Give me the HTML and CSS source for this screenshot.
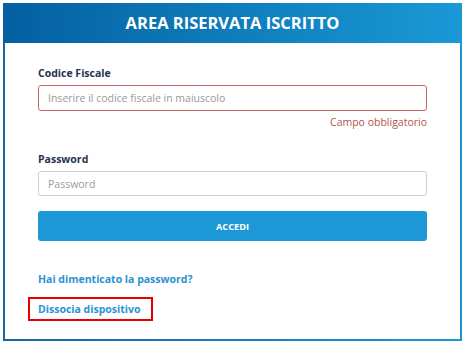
FILE: index.html
```html
<!DOCTYPE html>
<html lang="it">
<head>
<meta charset="utf-8">
<title>Area riservata iscritto</title>
<link rel="stylesheet" href="styles.css">
</head>
<body>
<div class="panel">
  <div class="panel-head">AREA RISERVATA ISCRITTO</div>
  <form class="panel-body">
    <label class="label label-first">Codice Fiscale</label>
    <input class="field field-error" type="text" placeholder="Inserire il codice fiscale in maiuscolo">
    <div class="error">Campo obbligatorio</div>
    <label class="label label-second">Password</label>
    <input class="field field-pass" type="password" placeholder="Password">
    <button class="btn" type="button">ACCEDI</button>
    <a class="link link-first" href="#">Hai dimenticato la password?</a>
    <div class="link-row"><a class="link link-boxed" href="#">Dissocia dispositivo</a></div>
  </form>
</div>
</body>
</html>
```

FILE: styles.css
```css
html, body {
  margin: 0;
  padding: 0;
  background: #ffffff;
}
body {
  padding: 3px 0 0 3px;
  font-family: "Open Sans", "Noto Sans", sans-serif;
}
.panel {
  width: 455px;
  border: 2px solid;
  border-image: linear-gradient(to right, #1a64a0, #1b97d4) 1;
  border-top: 0;
  background: #fff;
  box-sizing: content-box;
}
.panel-head {
  height: 40px;
  line-height: 40px;
  margin: 0 -2px;
  background: linear-gradient(to right, #0460a0, #1a99d6);
  color: #fff;
  font-weight: 700;
  font-size: 16.5px;
  text-align: center;
}
.panel-body {
  display: flex;
  flex-direction: column;
  align-items: stretch;
  padding: 0 33px 18px 33px;
  margin: 0;
}
.label {
  display: block;
  font-size: 10.5px;
  font-weight: 700;
  line-height: 16px;
  color: #26334f;
}
.label-first { margin-top: 22px; }
.label-second { margin-top: 21px; }
.field {
  margin-top: 4px;
  height: 26px;
  box-sizing: border-box;
  border: 1px solid #d0d0d0;
  border-radius: 3px;
  padding: 0 9px;
  font-family: "Open Sans", "Noto Sans", sans-serif;
  font-size: 10.5px;
  color: #333;
  outline: none;
}
.field::placeholder {
  color: #9a9a9a;
}
.field-error {
  border-color: #c46a6a;
}
.field-pass {
  height: 25px;
}
.error {
  margin-top: 3px;
  line-height: 16px;
  font-size: 10.5px;
  color: #b5534c;
  text-align: right;
}
.btn {
  margin-top: 15px;
  height: 30px;
  border: 0;
  border-radius: 3px;
  background: #1b98d5;
  color: #fff;
  font-family: "Open Sans", "Noto Sans", sans-serif;
  font-weight: 700;
  font-size: 9.2px;
  padding: 0;
}
.link {
  font-size: 10.5px;
  font-weight: 700;
  line-height: 16px;
  color: #2a92d2;
  text-decoration: none;
}
.link-first {
  margin-top: 30px;
  align-self: flex-start;
}
.link-row {
  margin-top: 10px;
  margin-left: -10px;
  display: flex;
}
.link-boxed {
  display: inline-block;
  border: 2px solid #e80000;
  padding: 2px 11px 2px 8px;
  line-height: 16px;
}
```
